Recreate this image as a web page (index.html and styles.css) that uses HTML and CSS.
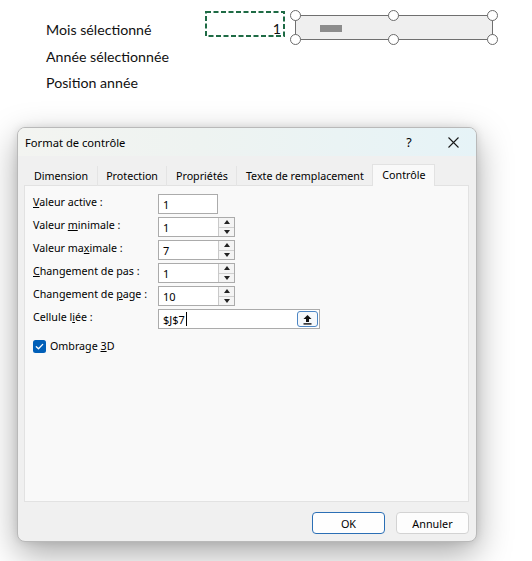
FILE: index.html
```html
<!DOCTYPE html>
<html lang="fr">
<head>
<meta charset="utf-8">
<title>Format de contrôle</title>
<link rel="stylesheet" href="styles.css">
</head>
<body>
<div class="sheet">
  <div class="labels">
    <div>Mois sélectionné</div>
    <div>Année sélectionnée</div>
    <div>Position année</div>
  </div>
  <div class="cell">
    <svg class="ants" width="80" height="26" viewBox="0 0 80 26"><rect x="1" y="1" width="78" height="24" fill="none" stroke="#1e6b45" stroke-width="2" stroke-dasharray="5 2.5"/></svg>
    <span class="cell-val">1</span>
  </div>
  <div class="scroll">
    <span class="thumb"></span>
    <span class="handle h-tl"></span>
    <span class="handle h-tm"></span>
    <span class="handle h-tr"></span>
    <span class="handle h-bl"></span>
    <span class="handle h-bm"></span>
    <span class="handle h-br"></span>
  </div>
</div>

<div class="dialog">
  <div class="titlebar">
    <span class="title">Format de contrôle</span>
    <span class="help">?</span>
    <span class="close">
      <svg width="11" height="11" viewBox="0 0 11 11"><path d="M0.5 0.5 L10.5 10.5 M10.5 0.5 L0.5 10.5" stroke="#1a1a1a" stroke-width="1.1" fill="none"/></svg>
    </span>
  </div>
  <div class="tabs">
    <span class="tab">Dimension</span>
    <span class="tab">Protection</span>
    <span class="tab">Propriétés</span>
    <span class="tab">Texte de remplacement</span>
    <span class="tab active">Contrôle</span>
  </div>
  <div class="panel">
    <div class="form">
      <span class="lbl"><u>V</u>aleur active :</span>
      <span class="field w-short"><span class="val">1</span></span>

      <span class="lbl">Valeur <u>m</u>inimale :</span>
      <span class="field w-spin"><span class="val">1</span><span class="spinner"><span class="up"></span><span class="down"></span></span></span>

      <span class="lbl">Valeur ma<u>x</u>imale :</span>
      <span class="field w-spin"><span class="val">7</span><span class="spinner"><span class="up"></span><span class="down"></span></span></span>

      <span class="lbl"><u>C</u>hangement de pas :</span>
      <span class="field w-spin"><span class="val">1</span><span class="spinner"><span class="up"></span><span class="down"></span></span></span>

      <span class="lbl">Changement de <u>p</u>age :</span>
      <span class="field w-spin"><span class="val">10</span><span class="spinner"><span class="up"></span><span class="down"></span></span></span>

      <span class="lbl">Cellule l<u>i</u>ée :</span>
      <span class="field w-long"><span class="val">$J$7<span class="caret"></span></span>
        <span class="ref-btn">
          <svg width="11" height="11" viewBox="0 0 11 11"><path d="M5.5 1 L1.5 5 H4 V8 H7 V5 H9.5 Z" fill="#111"/><rect x="1.5" y="9.2" width="8" height="1.4" fill="#111"/></svg>
        </span>
      </span>
    </div>
    <div class="check-row">
      <span class="checkbox">
        <svg width="13" height="13" viewBox="0 0 13 13"><path d="M3.3 6.7 L5.5 8.8 L9.7 4.4" stroke="#fff" stroke-width="1.3" fill="none" stroke-linecap="round" stroke-linejoin="round"/></svg>
      </span>
      <span class="check-lbl">Ombrage <u>3</u>D</span>
    </div>
  </div>
  <div class="footer">
    <button class="btn ok">OK</button>
    <button class="btn">Annuler</button>
  </div>
</div>
</body>
</html>
```
FILE: styles.css
```css
* { box-sizing: border-box; }
html, body { margin: 0; padding: 0; background: #ffffff; }
body { width: 532px; height: 561px; overflow: hidden; }

/* ---- worksheet ---- */
.sheet {
  height: 127px;
  display: flex;
  align-items: flex-start;
  font-family: Lato, "Noto Sans", sans-serif;
  font-size: 14.2px;
  color: #111;
}
.labels {
  width: 205px;
  padding-left: 46px;
  padding-top: 17px;
  line-height: 26.5px;
}
.cell {
  position: relative;
  margin-top: 11px;
  width: 80px;
  height: 26px;
  display: flex;
  justify-content: flex-end;
  align-items: flex-end;
  padding-right: 4px;
  padding-bottom: 0;
  line-height: 17px;
}
.ants { position: absolute; left: 0; top: 0; }
.scroll {
  position: relative;
  margin-left: 10px;
  margin-top: 15px;
  width: 198px;
  height: 25px;
  background: #efefef;
  border: 1px solid #6f6f6f;
  padding: 9px 0 0 24px;
}
.thumb {
  display: block;
  width: 22px;
  height: 7px;
  background: #8c8c8c;
}
.handle {
  position: absolute;
  width: 11px;
  height: 11px;
  border-radius: 50%;
  background: #fff;
  border: 1.8px solid #6b6b6b;
}
.h-tl { left: -6px; top: -6px; }
.h-tm { left: 92px; top: -6px; }
.h-tr { right: -6px; top: -6px; }
.h-bl { left: -6px; bottom: -6px; }
.h-bm { left: 92px; bottom: -6px; }
.h-br { right: -6px; bottom: -6px; }

/* ---- dialog ---- */
.dialog {
  margin-left: 17px;
  width: 460px;
  height: 415px;
  background: #f0f0f0;
  border: 1px solid #b9b9b9;
  border-radius: 8px;
  box-shadow: 0 12px 34px rgba(0, 0, 0, 0.34), 0 0 8px rgba(0, 0, 0, 0.1);
  font-family: "Noto Sans", "Open Sans", sans-serif;
  font-size: 10.7px;
  color: #000;
  display: flex;
  flex-direction: column;
  overflow: hidden;
}
.titlebar {
  height: 28px;
  display: flex;
  align-items: center;
  padding-left: 7px;
  background: linear-gradient(90deg, #f3f4f1 0%, #eef3f1 40%, #e6f3f7 100%);
}
.title { flex: 1; font-size: 11.2px; }
.help { width: 14px; text-align: center; font-size: 12.5px; margin-right: 32px; }
.close { width: 11px; height: 11px; margin-right: 17px; display: flex; }

.tabs {
  display: flex;
  align-items: flex-end;
  margin-top: 8px;
  padding-left: 6px;
  height: 22px;
  position: relative;
  z-index: 1;
}
.tab {
  height: 20px;
  padding: 0 8.5px;
  display: flex;
  align-items: center;
  border-left: 1px solid #e4e4e4;
  white-space: nowrap;
}
.tab:first-child { border-left-color: transparent; padding-left: 9px; }
.tab.active {
  height: 22px;
  padding: 0 9px 2px;
  background: #f9f9f9;
  border: 1px solid #e2e2e2;
  border-bottom: none;
}
.panel {
  margin: -1px 7px 0 6px;
  height: 317px;
  background: #f9f9f9;
  border: 1px solid #e2e2e2;
  padding: 8px 8px;
}
.form {
  display: grid;
  grid-template-columns: 125px auto;
  justify-content: start;
  row-gap: 3px;
}
.lbl { line-height: 16px; white-space: nowrap; }
.field {
  height: 20px;
  background: #fff;
  border: 1px solid #ababab;
  display: flex;
  align-items: center;
}
.w-short { width: 60px; }
.w-spin { width: 77px; }
.w-long { width: 162px; }
.val { flex: 1; padding-left: 4px; display: flex; align-items: center; font-size: 11px; }
.caret { display: inline-block; width: 1px; height: 14px; background: #000; margin-left: 1px; }
.spinner {
  width: 16px;
  height: 18px;
  border-left: 1px solid #c9c9c9;
  display: flex;
  flex-direction: column;
}
.spinner .up, .spinner .down {
  flex: 1;
  display: flex;
  align-items: center;
  justify-content: center;
  background: #f4f4f4;
}
.spinner .up { border-bottom: 1px solid #cfcfcf; }
.spinner .up::before {
  content: "";
  border-left: 3px solid transparent;
  border-right: 3px solid transparent;
  border-bottom: 4px solid #222;
}
.spinner .down::before {
  content: "";
  border-left: 3px solid transparent;
  border-right: 3px solid transparent;
  border-top: 4px solid #222;
}
.ref-btn {
  width: 21px;
  height: 16px;
  margin-right: 1px;
  border: 1px solid #4d86c4;
  border-radius: 3px;
  background: #f6f9fc;
  display: flex;
  align-items: center;
  justify-content: center;
}
.check-row {
  margin-top: 10px;
  display: flex;
  align-items: center;
  gap: 4px;
}
.checkbox {
  width: 13px;
  height: 13px;
  border-radius: 2.5px;
  background: #005fb8;
  display: flex;
}
.check-lbl { line-height: 14px; }

.footer {
  display: flex;
  justify-content: flex-end;
  gap: 11px;
  padding-right: 7px;
  margin-top: 10px;
}
.btn {
  width: 73px;
  height: 22px;
  font-family: inherit;
  font-size: 10.8px;
  color: #000;
  background: #fdfdfd;
  border: 1px solid #d3d3d3;
  border-radius: 4px;
  padding: 0;
}
.btn.ok { border-color: #2b6fb5; background: #fefefe; }
```
